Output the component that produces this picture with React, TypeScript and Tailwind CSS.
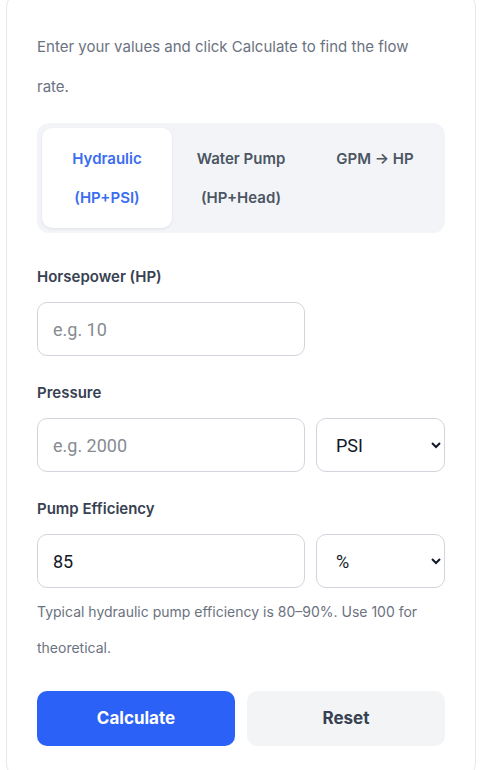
import React, { useState } from "react";

const TABS = [
  { id: "hyd", label: "Hydraulic (HP+PSI)" },
  { id: "pump", label: "Water Pump (HP+Head)" },
  { id: "gpm", label: "GPM → HP" },
];

const inputCls =
  "h-[54px] w-full rounded-[10px] border border-[#d1d5db] bg-white px-[15px] text-[18px] text-[#111827] placeholder:text-[#878b92] outline-none font-['Segoe_UI',Roboto,sans-serif]";
const selectCls =
  "h-[54px] w-full rounded-[10px] border border-[#d1d5db] bg-white pl-[15px] pr-[8px] text-[18px] text-[#111827] outline-none font-['Segoe_UI',Roboto,sans-serif]";

function Field({ label, children }: { label: string; children: React.ReactNode }) {
  return (
    <div className="flex flex-col">
      <label className="mb-[13px] text-[15px] font-semibold leading-[24px] text-[#374151]">{label}</label>
      {children}
    </div>
  );
}

export default function App() {
  const [tab, setTab] = useState("hyd");
  const [hp, setHp] = useState("");
  const [psi, setPsi] = useState("");
  const [eff, setEff] = useState("85");

  return (
    <div className="min-h-screen bg-white px-[6px] font-['Inter',sans-serif]">
      <div className="-mt-[10px] rounded-[18px] border border-[#e5e7eb] bg-white px-[30px] pt-[36px] pb-[34px]">
        <p className="max-w-[396px] text-[15px] leading-[40px] text-[#6b7280]">
          Enter your values and click Calculate to find the flow rate.
        </p>

        <div className="mt-[16px] grid grid-cols-3 gap-[4px] rounded-[12px] bg-[#f3f4f7] p-[5px]">
          {TABS.map((t) => (
            <button
              key={t.id}
              onClick={() => setTab(t.id)}
              className={
                "self-stretch rounded-[10px] px-[10px] py-[11px] text-center text-[15px] font-semibold leading-[39px] " +
                (tab === t.id
                  ? "bg-white text-[#3a6df0] shadow-[0_1px_3px_rgba(0,0,0,0.08)]"
                  : "text-[#4b5563]")
              }
            >
              <span className="block h-full">{t.label}</span>
            </button>
          ))}
        </div>

        <div className="mt-[32px] flex flex-col gap-[25px]">
          <Field label="Horsepower (HP)">
            <div className="grid grid-cols-[268px_1fr] gap-[11px]">
              <input className={inputCls} placeholder="e.g. 10" value={hp} onChange={(e) => setHp(e.target.value)} />
            </div>
          </Field>

          <Field label="Pressure">
            <div className="grid grid-cols-[268px_1fr] gap-[11px]">
              <input className={inputCls} placeholder="e.g. 2000" value={psi} onChange={(e) => setPsi(e.target.value)} />
              <select className={selectCls} defaultValue="PSI">
                <option>PSI</option>
                <option>bar</option>
                <option>kPa</option>
              </select>
            </div>
          </Field>

          <div className="flex flex-col">
            <label className="mb-[13px] text-[15px] font-semibold leading-[24px] text-[#374151]">Pump Efficiency</label>
            <div className="grid grid-cols-[268px_1fr] gap-[11px]">
              <input className={inputCls} value={eff} onChange={(e) => setEff(e.target.value)} />
              <select className={selectCls} defaultValue="%">
                <option>%</option>
              </select>
            </div>
            <p className="mt-[6px] text-[14px] leading-[36px] text-[#6b7280]">
              Typical hydraulic pump efficiency is 80–90%. Use 100 for theoretical.
            </p>
          </div>
        </div>

        <div className="mt-[25px] grid grid-cols-2 gap-[12px]">
          <button className="h-[55px] rounded-[10px] bg-[#2b61f6] text-[17px] font-bold text-white">Calculate</button>
          <button
            className="h-[55px] rounded-[10px] bg-[#f3f4f6] text-[17px] font-bold text-[#374151]"
            onClick={() => {
              setHp("");
              setPsi("");
              setEff("85");
            }}
          >
            Reset
          </button>
        </div>
      </div>
    </div>
  );
}
